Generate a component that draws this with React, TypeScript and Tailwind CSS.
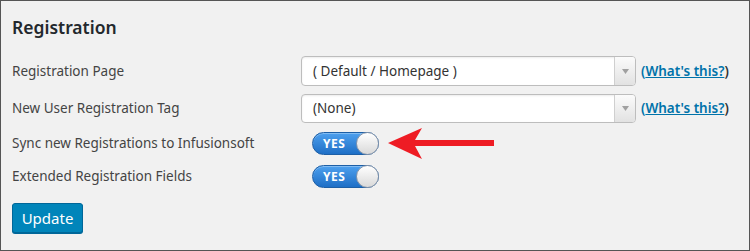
import React from "react";

function SelectBox({ value }: { value: string }) {
  return (
    <div className="flex h-full w-[335px] overflow-hidden rounded-[4px] border border-[#bdbdbd] bg-white shadow-[inset_0_1px_2px_rgba(0,0,0,0.08)]">
      <div className="flex flex-1 items-center pl-[11px] text-[13.5px] text-[#333]">{value}</div>
      <div className="flex w-[21px] items-center justify-center border-l border-[#cfcfcf] bg-gradient-to-b from-[#fbfbfb] to-[#e2e2e2]">
        <svg width="7" height="5" viewBox="0 0 7 5">
          <path d="M0 0 L7 0 L3.5 5 Z" fill="#a0a0a0" />
        </svg>
      </div>
    </div>
  );
}

function WhatsThis() {
  return (
    <span className="ml-[5px] text-[13.5px] font-semibold text-[#333]">
      <span className="text-[#0073aa]">(</span>
      <a href="#" className="text-[#0073aa] underline">
        What's this?
      </a>
      )
    </span>
  );
}

function Toggle() {
  return (
    <div className="relative ml-[11px] h-[23px] w-[67px] rounded-full border border-[#1d5fa6] bg-gradient-to-b from-[#4da0ee] to-[#1e6fc6] shadow-[inset_0_1px_0_rgba(255,255,255,0.3)]">
      <span className="absolute left-[10px] top-0 text-[12px] font-bold leading-[21px] tracking-[0.5px] text-white">
        YES
      </span>
      <span className="absolute right-[-1px] top-[-1px] h-[23px] w-[23px] rounded-full border border-[#8796aa] bg-gradient-to-b from-[#ffffff] to-[#d9d9d9]" />
    </div>
  );
}

export default function App() {
  const font = { fontFamily: '"Noto Sans", "Open Sans", sans-serif' };
  return (
    <div
      className="box-border flex h-[251px] w-[750px] flex-col border border-[#555] bg-[#f1f1f1] pl-[11px] pt-[13px] text-[#444]"
      style={font}
    >
      <h2 className="h-[26px] text-[17.5px] font-semibold leading-[26px] text-[#23282d]">Registration</h2>

      <div className="mt-[16px] flex h-[30px] items-center">
        <div className="w-[289px] text-[13.5px]">Registration Page</div>
        <SelectBox value="( Default / Homepage )" />
        <WhatsThis />
      </div>

      <div className="mt-[8px] flex h-[29px] items-center">
        <div className="w-[289px] text-[13.5px]">New User Registration Tag</div>
        <SelectBox value="(None)" />
        <WhatsThis />
      </div>

      <div className="mt-[9px] flex h-[23px] items-center">
        <div className="w-[289px] text-[13.5px]">Sync new Registrations to Infusionsoft</div>
        <Toggle />
        <svg className="ml-[9px]" width="108" height="34" viewBox="0 0 108 34">
          <path d="M0 16 L34 1 L27 13 L106 13 L106 19 L27 19 L34 32 Z" fill="#ee1c24" />
        </svg>
      </div>

      <div className="mt-[10px] flex h-[23px] items-center">
        <div className="w-[289px] text-[13.5px]">Extended Registration Fields</div>
        <Toggle />
      </div>

      <div className="mt-[15px]">
        <button className="h-[30px] w-[71px] rounded-[3px] border border-[#006799] bg-[#0085ba] text-[15px] text-white shadow-[0_1px_0_#006799]">
          Update
        </button>
      </div>
    </div>
  );
}
